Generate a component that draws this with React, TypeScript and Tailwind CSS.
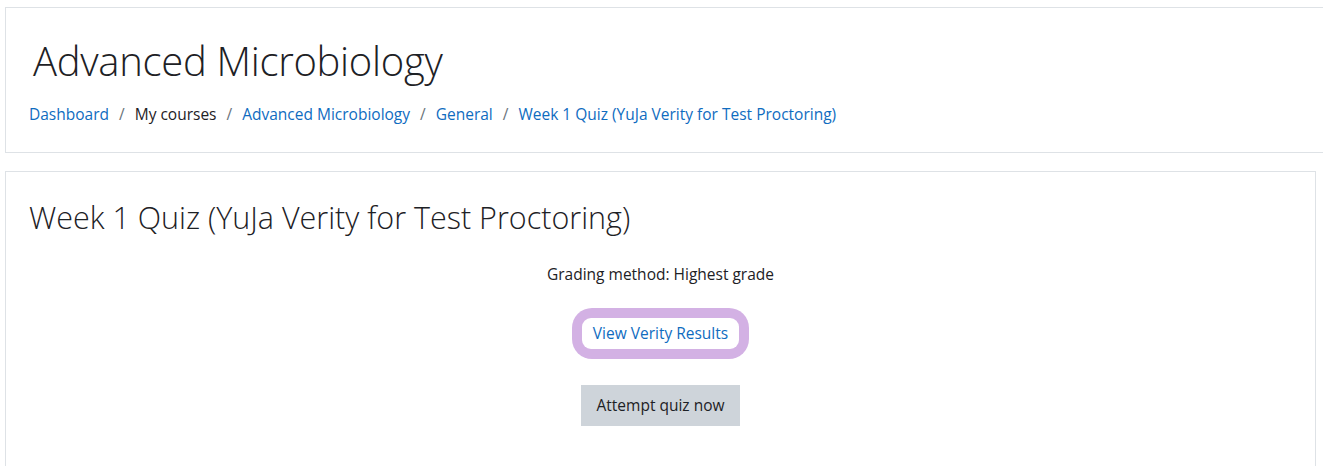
export default function App() {
  const crumbs = [
    { label: "Dashboard", link: true },
    { label: "My courses", link: false },
    { label: "Advanced Microbiology", link: true },
    { label: "General", link: true },
    { label: "Week 1 Quiz (YuJa Verity for Test Proctoring)", link: true },
  ];

  return (
    <div
      className="h-[466px] overflow-hidden bg-white pl-[5px] pt-[7px] text-[#1d2125]"
      style={{ fontFamily: '"Open Sans", "Noto Sans", sans-serif' }}
    >
      {/* page header */}
      <div className="h-[146px] w-[1330px] border border-[#dee2e6] bg-white pl-[27px] pt-[28px]">
        <h1 className="text-[40px] leading-[50px] font-light tracking-[-0.3px]">
          Advanced Microbiology
        </h1>
        <nav className="mt-[16px] -ml-[4px] flex items-center text-[15.5px] leading-[24px]">
          {crumbs.map((c, i) => (
            <span key={c.label} className="flex items-center">
              {i > 0 && <span className="px-[10px] text-[#6a737b]">/</span>}
              <span className={c.link ? "text-[#0f6cbf]" : "text-[#1d2125]"}>
                {c.label}
              </span>
            </span>
          ))}
        </nav>
      </div>

      {/* main card */}
      <div className="mt-[18px] h-[320px] w-[1311px] border border-[#dee2e6] bg-white">
        <h2 className="pl-[23px] pt-[23px] text-[30.5px] leading-[44px] font-light">
          Week 1 Quiz (YuJa Verity for Test Proctoring)
        </h2>
        <div className="flex flex-col items-center">
          <p className="mt-[23px] text-[15.5px] leading-[24px]">
            Grading method: Highest grade
          </p>
          <div className="mt-[22px] rounded-[20px] bg-[#d3b1e4] p-[10px]">
            <a className="block rounded-[9px] bg-white px-[11px] text-[15.5px] leading-[31px] text-[#0f6cbf]">
              View Verity Results
            </a>
          </div>
          <button className="mt-[26px] h-[41px] w-[159px] bg-[#ced4da] text-[15.5px] text-[#1d2125]">
            Attempt quiz now
          </button>
        </div>
      </div>
    </div>
  );
}
